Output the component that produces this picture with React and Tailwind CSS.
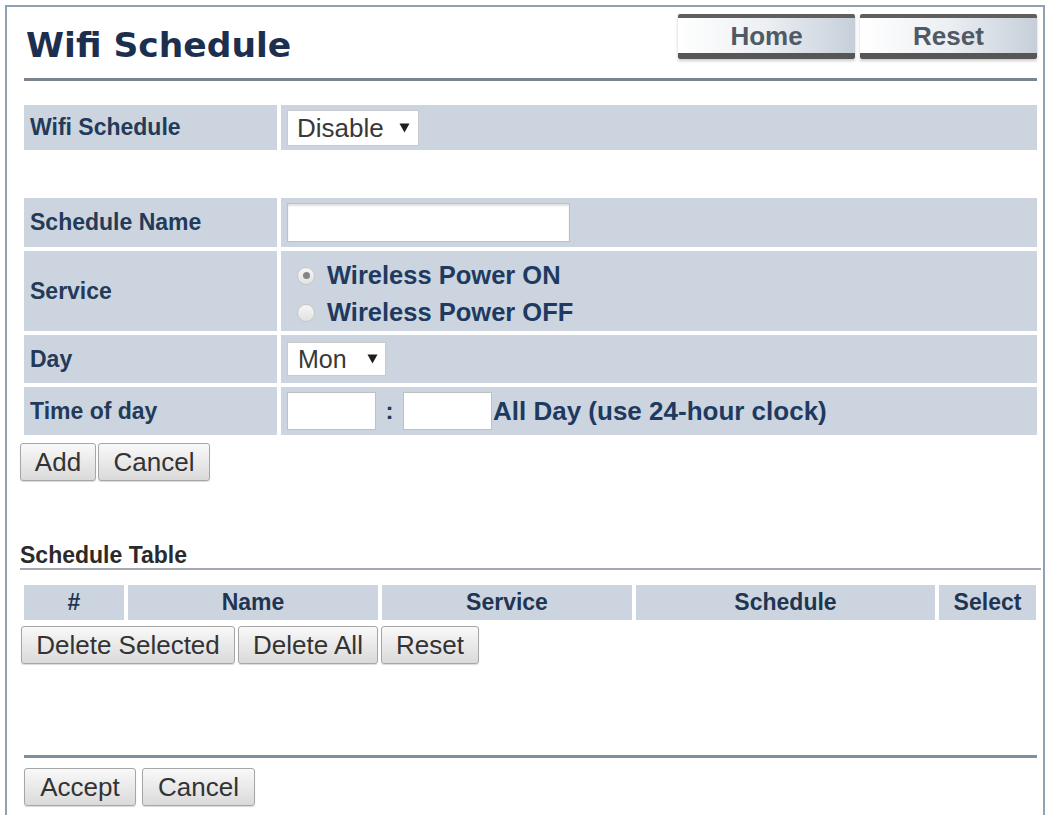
import React from "react";

function NavBtn({ label }) {
  return (
    <div className="w-[177px] h-[45px] flex flex-col shadow-[0_2px_3px_rgba(0,0,0,0.2)]">
      <div className="h-[4px] bg-[#5f5f5f] rounded-t-[2px]" />
      <div className="h-[35px] bg-linear-to-r from-[#ffffff] via-[#eceff3] to-[#c6cfd9] flex items-center justify-center text-[26px] font-bold text-[#4f5a66] leading-none">
        {label}
      </div>
      <div className="h-[6px] bg-[#565656] rounded-b-[2px]" />
    </div>
  );
}

function Btn({ children, w }) {
  return (
    <button
      className={`${w} h-[38px] border border-[#a6a6a6] rounded-[3px] bg-linear-to-b from-[#f9f9f9] to-[#dadada] text-[26px] text-[#333] leading-none flex items-center justify-center shadow-[0_1px_1px_rgba(0,0,0,0.15)]`}
    >
      {children}
    </button>
  );
}

function Caret({ className }) {
  return (
    <svg width="11" height="10" viewBox="0 0 11 10" className={className}>
      <path d="M0.5 0.5 L10.5 0.5 L5.5 9.5 Z" fill="#1e1e1e" />
    </svg>
  );
}

function Radio({ on }) {
  return (
    <span className="w-[18px] h-[18px] rounded-full border border-[#c6c6c6] bg-linear-to-b from-[#f6f6f6] to-[#e2e2e2] flex items-center justify-center shrink-0">
      {on && <span className="w-[7px] h-[7px] rounded-full bg-[#858585]" />}
    </span>
  );
}

function Label({ children, w = "w-[253px]" }) {
  return (
    <div className={`${w} shrink-0 bg-[#ccd5df] pl-[6px] flex items-center text-[23px] font-bold text-[#233a59]`}>
      {children}
    </div>
  );
}

function Value({ children }) {
  return <div className="flex-1 bg-[#ccd5df] pl-[6px] flex items-center">{children}</div>;
}

export default function App() {
  return (
    <div className="w-[1053px] h-[815px] bg-white overflow-hidden font-['Liberation_Sans',Arial,sans-serif]">
      <div className="ml-[5px] mt-[5px] w-[1040px] h-[830px] border-l-2 border-t-2 border-r-2 border-[#8ea2b6] pl-[17px] pt-[7px]">
        {/* Header */}
        <div className="flex justify-between items-start w-[1013px] h-[45px]">
          <h1 className="font-['DejaVu_Sans',Verdana,sans-serif] font-bold text-[34.5px] leading-[40px] mt-[11px] ml-[2px] text-[#1c2f4f]">
            Wifi Schedule
          </h1>
          <div className="flex gap-[5px]">
            <NavBtn label="Home" />
            <NavBtn label="Reset" />
          </div>
        </div>
        <div className="mt-[19px] w-[1013px] h-[3px] bg-[#7b8590]" />

        {/* Wifi schedule row */}
        <div className="mt-[24px] w-[1013px] h-[45px] flex gap-[4px]">
          <Label>Wifi Schedule</Label>
          <Value>
            <div className="w-[132px] h-[36px] bg-white border border-[#cacaca] flex items-center pl-[9px] text-[26px] text-[#383838] leading-none">
              <span>Disable</span>
              <Caret className="ml-[15px]" />
            </div>
          </Value>
        </div>

        {/* Schedule form */}
        <div className="mt-[48px] w-[1013px] flex flex-col gap-[4px]">
          <div className="h-[49px] flex gap-[4px]">
            <Label>Schedule Name</Label>
            <Value>
              <div className="w-[283px] h-[39px] bg-white border border-[#c0c0c0] shadow-[inset_0_2px_2px_rgba(0,0,0,0.12)]" />
            </Value>
          </div>
          <div className="h-[80px] flex gap-[4px]">
            <Label>Service</Label>
            <div className="flex-1 bg-[#ccd5df] pl-[16px] pt-[6px] flex flex-col text-[25.5px] font-bold text-[#1f3a60]">
              <div className="h-[37px] flex items-center gap-[12px]">
                <Radio on />
                <span>Wireless Power ON</span>
              </div>
              <div className="h-[37px] flex items-center gap-[12px]">
                <Radio />
                <span>Wireless Power OFF</span>
              </div>
            </div>
          </div>
          <div className="h-[48px] flex gap-[4px]">
            <Label>Day</Label>
            <Value>
              <div className="w-[99px] h-[34px] bg-white border border-[#cacaca] flex items-center pl-[10px] text-[25px] text-[#383838] leading-none">
                <span>Mon</span>
                <Caret className="ml-[20px]" />
              </div>
            </Value>
          </div>
          <div className="h-[48px] flex gap-[4px]">
            <Label>Time of day</Label>
            <Value>
              <div className="w-[89px] h-[38px] bg-white border border-[#c0c0c0]" />
              <span className="w-[27px] text-center text-[24px] font-bold text-[#1f3a60]">:</span>
              <div className="w-[89px] h-[38px] bg-white border border-[#c0c0c0]" />
              <span className="ml-[1px] text-[26px] font-bold text-[#1f3a60]">All Day (use 24-hour clock)</span>
            </Value>
          </div>
        </div>

        <div className="mt-[8px] -ml-[4px] flex gap-[2px]">
          <Btn w="w-[76px]">Add</Btn>
          <Btn w="w-[112px]">Cancel</Btn>
        </div>

        {/* Schedule table */}
        <div className="mt-[61px] -ml-[4px] w-[1021px] border-b-2 border-[#a2a9b0] text-[23px] leading-[26px] font-bold text-[#2a2a2a]">
          Schedule Table
        </div>
        <div className="mt-[15px] h-[35px] w-[1012px] flex gap-[4px] text-[23px] font-bold text-[#1f3552]">
          <div className="w-[100px] bg-[#ccd5df] flex items-center justify-center">#</div>
          <div className="w-[250px] bg-[#ccd5df] flex items-center justify-center">Name</div>
          <div className="w-[250px] bg-[#ccd5df] flex items-center justify-center">Service</div>
          <div className="w-[299px] bg-[#ccd5df] flex items-center justify-center">Schedule</div>
          <div className="w-[97px] bg-[#ccd5df] flex items-center justify-center">Select</div>
        </div>
        <div className="mt-[6px] -ml-[3px] flex gap-[3px]">
          <Btn w="w-[214px]">Delete Selected</Btn>
          <Btn w="w-[140px]">Delete All</Btn>
          <Btn w="w-[98px]">Reset</Btn>
        </div>

        <div className="mt-[91px] w-[1013px] h-[3px] bg-[#7e8fa0]" />
        <div className="mt-[10px] flex gap-[6px]">
          <Btn w="w-[112px]">Accept</Btn>
          <Btn w="w-[113px]">Cancel</Btn>
        </div>
      </div>
    </div>
  );
}
